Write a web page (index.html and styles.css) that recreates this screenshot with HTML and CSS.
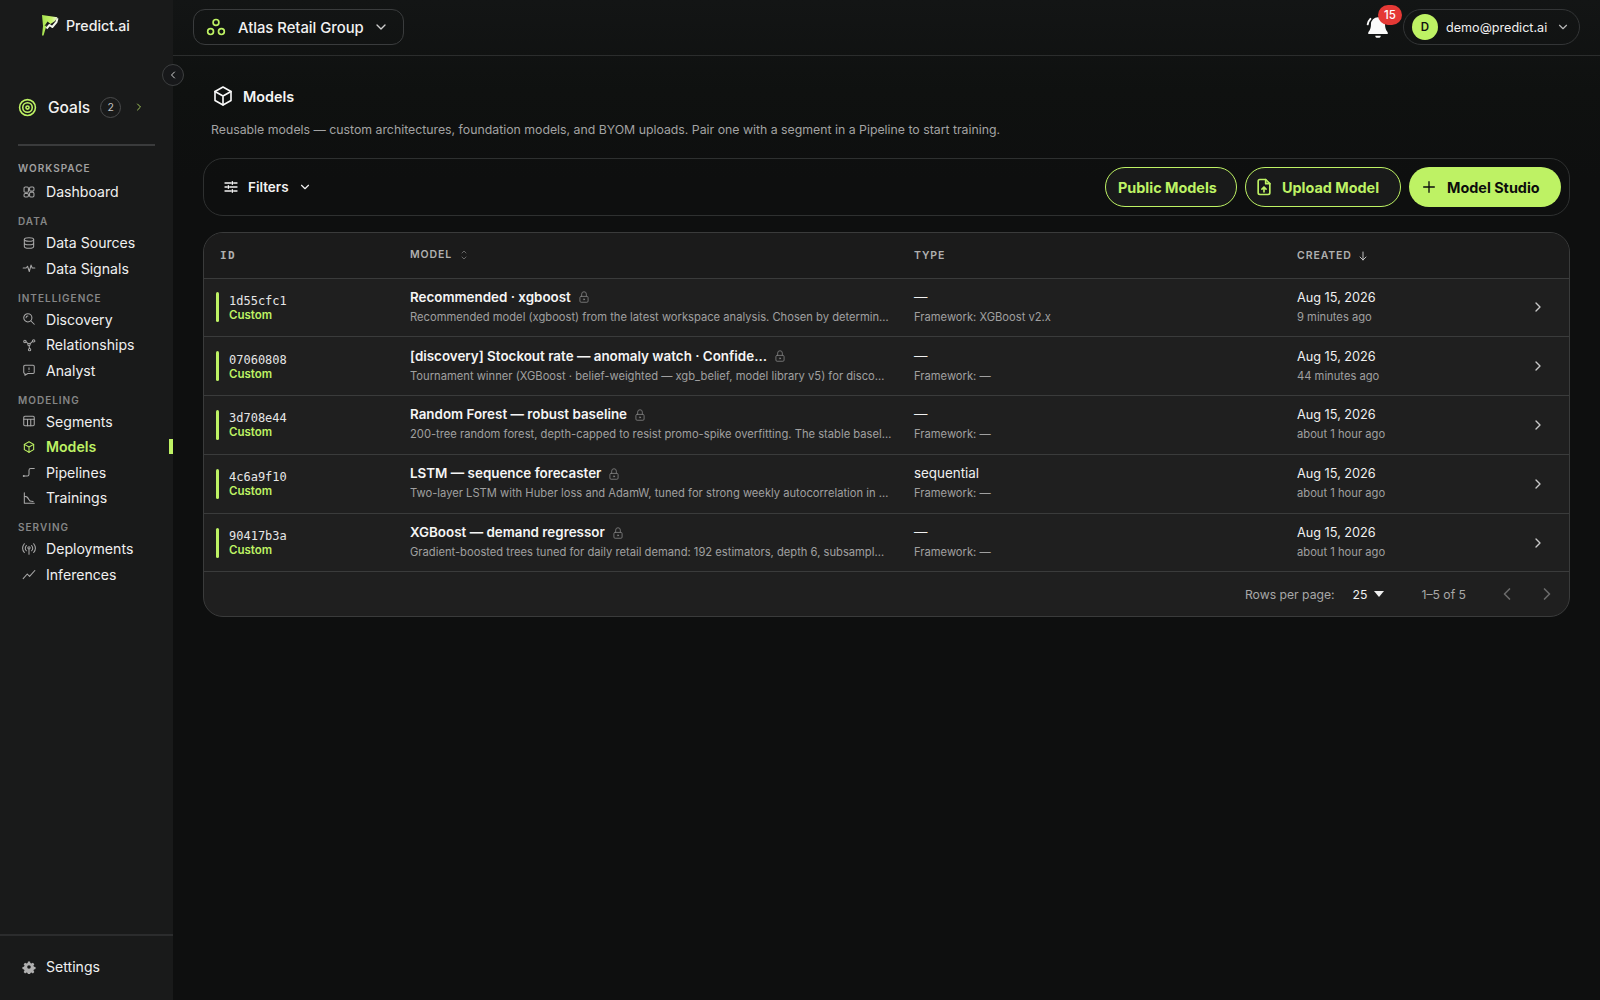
FILE: index.html
```html
<!DOCTYPE html>
<html lang="en">
<head>
<meta charset="utf-8">
<title>Models – Predict.ai</title>
<link rel="stylesheet" href="styles.css">
</head>
<body>
<svg class="sprite" width="0" height="0" aria-hidden="true">
  <defs>
    <symbol id="i-cube" viewBox="0 0 24 24"><path d="M12 3l8 4.500v9L12 21l-8-4.500v-9L12 3z"/><path d="M12 12l8-4.500M12 12v9M12 12L4 7.500"/></symbol>
    <symbol id="i-lock" viewBox="0 0 24 24"><rect x="5" y="11" width="14" height="10" rx="2"/><path d="M8 11V7a4 4 0 0 1 8 0v4"/><circle cx="12" cy="16" r="1"/></symbol>
    <symbol id="i-right" viewBox="0 0 24 24"><path d="M9 6l6 6-6 6"/></symbol>
    <symbol id="i-left" viewBox="0 0 24 24"><path d="M15 6l-6 6 6 6"/></symbol>
    <symbol id="i-down" viewBox="0 0 24 24"><path d="M6 9l6 6 6-6"/></symbol>
    <linearGradient id="logo-grad" x1="0" y1="0" x2="1" y2="0"><stop offset="0" stop-color="#a6e34f"/><stop offset=".6" stop-color="#c6f26a"/><stop offset="1" stop-color="#eef7d8"/></linearGradient>
  </defs>
</svg>
<div class="app">
  <aside class="sidebar">
    <div class="brand">
      <svg class="brand-logo" viewBox="0 0 18 21" width="18" height="21"><path class="logo-fill" d="M1 0l15.500 2.200-2.500 3.800-4.500 3L6.500 6.500 3.500 11l2-.5L2.500 20.500 1 20.500 2 11 1 0z"/><path class="logo-line" d="M5.500 13.500L8.500 10l2.800 2L15.500 7l1-3.800"/></svg>
      <span class="brand-name">Predict.ai</span>
    </div>
    <button class="collapse" aria-label="Collapse sidebar"><svg class="ic" width="12" height="12"><use href="#i-left"/></svg></button>
    <div class="goals">
      <svg class="goals-icon" viewBox="0 0 24 24" width="19" height="19"><circle cx="12" cy="12" r="10"/><circle cx="12" cy="12" r="6"/><circle cx="12" cy="12" r="2"/></svg>
      <span class="goals-label">Goals</span>
      <span class="goals-badge">2</span>
      <svg class="ic goals-chev" width="12" height="12"><use href="#i-right"/></svg>
    </div>
    <nav class="nav">
      <div class="nav-group">WORKSPACE</div>
      <a class="nav-item"><svg class="ic" viewBox="0 0 24 24" width="14" height="14"><rect x="3.500" y="3.500" width="7.500" height="9" rx="2"/><rect x="13" y="3.500" width="7.500" height="7" rx="2"/><rect x="3.500" y="14.500" width="7.500" height="6" rx="2"/><rect x="13" y="12.500" width="7.500" height="8" rx="2"/></svg>Dashboard</a>
      <div class="nav-group">DATA</div>
      <a class="nav-item"><svg class="ic" viewBox="0 0 24 24" width="14" height="14"><ellipse cx="12" cy="6" rx="8" ry="3"/><path d="M4 6v12c0 1.700 3.600 3 8 3s8-1.300 8-3V6M4 12c0 1.700 3.600 3 8 3s8-1.300 8-3"/></svg>Data Sources</a>
      <a class="nav-item"><svg class="ic" viewBox="0 0 24 24" width="14" height="14"><path d="M2 12h5l2.500-3 3 9 3-11 2 5h4.500"/></svg>Data Signals</a>
      <div class="nav-group">INTELLIGENCE</div>
      <a class="nav-item"><svg class="ic" viewBox="0 0 24 24" width="14" height="14"><circle cx="10" cy="10" r="7"/><path d="M21 21l-6-6M7 10a3 3 0 0 1 3-3"/></svg>Discovery</a>
      <a class="nav-item"><svg class="ic" viewBox="0 0 24 24" width="14" height="14"><circle cx="5" cy="6" r="2"/><circle cx="20" cy="5" r="2"/><circle cx="13" cy="20" r="2"/><circle cx="12" cy="11" r="2"/><path d="M7 6.500l3.500 3M18 5.600L14 9.700M12.200 13l.6 5"/></svg>Relationships</a>
      <a class="nav-item"><svg class="ic" viewBox="0 0 24 24" width="14" height="14"><path d="M5 4h14a2 2 0 0 1 2 2v10a2 2 0 0 1-2 2h-9l-5 3v-3a2 2 0 0 1-2-2V6a2 2 0 0 1 2-2z"/><path d="M12 8v3M12 14v.1"/></svg>Analyst</a>
      <div class="nav-group">MODELING</div>
      <a class="nav-item"><svg class="ic" viewBox="0 0 24 24" width="14" height="14"><rect x="3" y="4" width="18" height="16" rx="2"/><path d="M3 9h18M9.500 9v11M15 9v11"/></svg>Segments</a>
      <a class="nav-item nav-item-active"><svg class="ic" width="14" height="14"><use href="#i-cube"/></svg>Models</a>
      <a class="nav-item"><svg class="ic" viewBox="0 0 24 24" width="14" height="14"><path d="M3 19h6c2 0 3-1 3-3V9c0-2 1-3 3-3h6"/><circle cx="3" cy="19" r=".8"/></svg>Pipelines</a>
      <a class="nav-item"><svg class="ic" viewBox="0 0 24 24" width="14" height="14"><path d="M4 3v18h17M4 9c5 0 6 2 8 6s4 2 7 3"/></svg>Trainings</a>
      <div class="nav-group">SERVING</div>
      <a class="nav-item"><svg class="ic" viewBox="0 0 24 24" width="14" height="14"><circle cx="12" cy="10" r="2"/><path d="M12 12v9M7.500 6a7 7 0 0 0 0 9M16.500 6a7 7 0 0 1 0 9M4 3a12 12 0 0 0 0 15M20 3a12 12 0 0 1 0 15"/></svg>Deployments</a>
      <a class="nav-item"><svg class="ic" viewBox="0 0 24 24" width="14" height="14"><path d="M2 20l7-8 4 4 9-10"/></svg>Inferences</a>
    </nav>
    <div class="sidebar-foot">
      <a class="nav-item"><svg class="ic-fill" viewBox="0 0 24 24" width="14" height="14"><path fill-rule="evenodd" d="M10 1.500h4l.6 3 2.300 1 2.600-1.700 2.800 2.800-1.700 2.600 1 2.300 3 .6v4l-3 .6-1 2.300 1.700 2.600-2.800 2.800-2.600-1.700-2.300 1-.6 3h-4l-.6-3-2.300-1-2.600 1.700-2.800-2.800 1.700-2.600-1-2.300-3-.6v-4l3-.6 1-2.300L1.700 6.600l2.800-2.800 2.600 1.700 2.300-1 .6-3zM12 8.500a3.500 3.500 0 1 0 0 7 3.500 3.500 0 0 0 0-7z" transform="translate(1.300 1.300) scale(.89)"/></svg>Settings</a>
    </div>
  </aside>
  <div class="main">
    <header class="topbar">
      <button class="workspace">
        <svg class="workspace-icon" viewBox="0 0 24 24" width="20" height="20"><circle cx="12" cy="6.500" r="3.500"/><circle cx="5.500" cy="17.500" r="3.500"/><circle cx="18.500" cy="17.500" r="3.500"/></svg>
        <span class="workspace-name">Atlas Retail Group</span>
        <svg class="ic" width="16" height="16"><use href="#i-down"/></svg>
      </button>
      <div class="top-actions">
        <div class="bell">
          <svg class="bell-icon" viewBox="0 0 24 24" width="26" height="26"><path d="M12 3a6.500 6.500 0 0 0-6.500 6.500c0 4.500-1.500 6-2.500 7.500v1.500h18V17c-1-1.500-2.500-3-2.500-7.500A6.500 6.500 0 0 0 12 3z"/><path d="M9.500 20h5a2.500 2 0 0 1-5 0z"/><path class="bell-ring" d="M2.500 9.500A9 9 0 0 1 5 4.500"/></svg>
          <span class="bell-badge">15</span>
        </div>
        <button class="user">
          <span class="avatar">D</span>
          <span class="user-mail">demo@predict.ai</span>
          <svg class="ic" width="14" height="14"><use href="#i-down"/></svg>
        </button>
      </div>
    </header>
    <main class="content">
      <div class="title-row">
        <svg class="ic title-icon" width="24" height="24"><use href="#i-cube"/></svg>
        <h1 class="title">Models</h1>
      </div>
      <p class="desc">Reusable models — custom architectures, foundation models, and BYOM uploads. Pair one with a segment in a Pipeline to start training.</p>
      <div class="toolbar">
        <button class="filters">
          <svg class="ic" viewBox="0 0 24 24" width="16" height="16"><path d="M3 6h9M16 6h5M3 12h3M10 12h11M3 18h9M16 18h5M14 4v4M8 10v4M14 16v4"/></svg>
          <span>Filters</span>
          <svg class="ic" width="14" height="14"><use href="#i-down"/></svg>
        </button>
        <div class="toolbar-actions">
          <button class="btn btn-outline">Public Models</button>
          <button class="btn btn-outline btn-upload"><svg class="ic" viewBox="0 0 24 24" width="20" height="20"><path d="M14 3H7a2 2 0 0 0-2 2v14a2 2 0 0 0 2 2h10a2 2 0 0 0 2-2V8l-5-5z"/><path d="M14 3v5h5M12 18v-6M9.500 14.500L12 12l2.500 2.500"/></svg>Upload Model</button>
          <button class="btn btn-solid"><svg class="ic" viewBox="0 0 24 24" width="16" height="16"><path d="M12 4v16M4 12h16"/></svg>Model Studio</button>
        </div>
      </div>
      <div class="table-card">
        <table class="table">
          <colgroup><col class="col-id"><col class="col-model"><col class="col-type"><col class="col-created"><col class="col-go"></colgroup>
          <thead>
            <tr>
              <th class="th-id">ID</th>
              <th>MODEL <svg class="ic sort" viewBox="0 0 24 24" width="12" height="14"><path d="M8 8l4-4 4 4M8 16l4 4 4-4"/></svg></th>
              <th>TYPE</th>
              <th>CREATED <svg class="ic sort-on" viewBox="0 0 24 24" width="12" height="12"><path d="M12 4v16M6 14l6 6 6-6"/></svg></th>
              <th></th>
            </tr>
          </thead>
          <tbody>
            <tr>
              <td><div class="idcell"><div><div class="mono">1d55cfc1</div><div class="custom">Custom</div></div></div></td>
              <td><div class="name">Recommended · xgboost <svg class="ic lock" width="14" height="14"><use href="#i-lock"/></svg></div><div class="sub">Recommended model (xgboost) from the latest workspace analysis. Chosen by determin…</div></td>
              <td><div class="type">—</div><div class="sub">Framework: XGBoost v2.x</div></td>
              <td><div class="date">Aug 15, 2026</div><div class="sub">9 minutes ago</div></td>
              <td class="go"><svg class="ic go-icon" width="16" height="16"><use href="#i-right"/></svg></td>
            </tr>
            <tr>
              <td><div class="idcell"><div><div class="mono">07060808</div><div class="custom">Custom</div></div></div></td>
              <td><div class="name">[discovery] Stockout rate — anomaly watch · Confide… <svg class="ic lock" width="14" height="14"><use href="#i-lock"/></svg></div><div class="sub">Tournament winner (XGBoost · belief-weighted — xgb_belief, model library v5) for disco…</div></td>
              <td><div class="type">—</div><div class="sub">Framework: —</div></td>
              <td><div class="date">Aug 15, 2026</div><div class="sub">44 minutes ago</div></td>
              <td class="go"><svg class="ic go-icon" width="16" height="16"><use href="#i-right"/></svg></td>
            </tr>
            <tr>
              <td><div class="idcell"><div><div class="mono">3d708e44</div><div class="custom">Custom</div></div></div></td>
              <td><div class="name">Random Forest — robust baseline <svg class="ic lock" width="14" height="14"><use href="#i-lock"/></svg></div><div class="sub">200-tree random forest, depth-capped to resist promo-spike overfitting. The stable basel…</div></td>
              <td><div class="type">—</div><div class="sub">Framework: —</div></td>
              <td><div class="date">Aug 15, 2026</div><div class="sub">about 1 hour ago</div></td>
              <td class="go"><svg class="ic go-icon" width="16" height="16"><use href="#i-right"/></svg></td>
            </tr>
            <tr>
              <td><div class="idcell"><div><div class="mono">4c6a9f10</div><div class="custom">Custom</div></div></div></td>
              <td><div class="name">LSTM — sequence forecaster <svg class="ic lock" width="14" height="14"><use href="#i-lock"/></svg></div><div class="sub">Two-layer LSTM with Huber loss and AdamW, tuned for strong weekly autocorrelation in …</div></td>
              <td><div class="type">sequential</div><div class="sub">Framework: —</div></td>
              <td><div class="date">Aug 15, 2026</div><div class="sub">about 1 hour ago</div></td>
              <td class="go"><svg class="ic go-icon" width="16" height="16"><use href="#i-right"/></svg></td>
            </tr>
            <tr>
              <td><div class="idcell"><div><div class="mono">90417b3a</div><div class="custom">Custom</div></div></div></td>
              <td><div class="name">XGBoost — demand regressor <svg class="ic lock" width="14" height="14"><use href="#i-lock"/></svg></div><div class="sub">Gradient-boosted trees tuned for daily retail demand: 192 estimators, depth 6, subsampl…</div></td>
              <td><div class="type">—</div><div class="sub">Framework: —</div></td>
              <td><div class="date">Aug 15, 2026</div><div class="sub">about 1 hour ago</div></td>
              <td class="go"><svg class="ic go-icon" width="16" height="16"><use href="#i-right"/></svg></td>
            </tr>
          </tbody>
        </table>
        <div class="pager">
          <span class="pager-label">Rows per page:</span>
          <span class="pager-size">25 <span class="caret"></span></span>
          <span class="pager-range">1–5 of 5</span>
          <svg class="ic pager-arrow" width="20" height="20"><use href="#i-left"/></svg>
          <svg class="ic pager-arrow" width="20" height="20"><use href="#i-right"/></svg>
        </div>
      </div>
    </main>
  </div>
</div>
</body>
</html>
```
FILE: styles.css
```css
* { box-sizing: border-box; }
html, body { margin: 0; height: 100%; }
body {
  background: #0e0f0f;
  color: #f2f2f2;
  font-family: Inter, "Liberation Sans", sans-serif;
  overflow: hidden;
}
button { font: inherit; color: inherit; background: none; border: 0; padding: 0; }
.sprite { position: absolute; }
.ic { fill: none; stroke: currentColor; stroke-width: 2; stroke-linecap: round; stroke-linejoin: round; flex: none; }
.ic-fill { fill: currentColor; flex: none; }

.app { display: flex; height: 1000px; }

/* sidebar */
.sidebar {
  position: relative;
  width: 173px;
  flex: none;
  background: #191a1a;
  display: flex;
  flex-direction: column;
}
.brand { display: flex; align-items: center; gap: 7px; padding: 13px 0 0 41px; height: 38px; }
.brand-logo { flex: none; }
.logo-fill { fill: url(#logo-grad); }
.logo-line { fill: none; stroke: #f4f7ec; stroke-width: 2; stroke-linejoin: round; }
.brand-name { font-size: 14.200px; font-weight: 500; color: #f0f0f0; }
.collapse {
  position: absolute;
  top: 64px;
  left: 162px;
  width: 22px;
  height: 22px;
  border-radius: 50%;
  border: 1px solid #3d3f40;
  background: #17181a;
  color: #d0d0d0;
  display: flex;
  align-items: center;
  justify-content: center;
  z-index: 2;
}
.goals { display: flex; align-items: center; margin-top: 57px; padding-left: 18px; height: 24px; }
.goals-icon { fill: none; stroke: #bef264; stroke-width: 2; flex: none; }
.goals-label { margin-left: 11px; font-size: 15.500px; font-weight: 500; }
.goals-badge {
  margin-left: 10px;
  width: 21px;
  height: 21px;
  border-radius: 50%;
  border: 1px solid #4a4b4c;
  font-size: 10.500px;
  color: #c4c4c4;
  display: flex;
  align-items: center;
  justify-content: center;
}
.goals-chev { margin-left: 12px; color: #a3c85a; }
.nav { margin: 25px 18px 0; border-top: 2px solid #3a3b3c; padding-top: 16px; }
.nav-group {
  font-size: 10px;
  font-weight: 600;
  letter-spacing: 1px;
  color: #858686;
  line-height: 13px;
  height: 13px;
  margin-top: 11px;
}
.nav-group:first-child { margin-top: 0; color: #a0a0a0; }
.nav-item {
  display: flex;
  align-items: center;
  gap: 10px;
  height: 25.500px;
  padding-left: 4px;
  font-size: 14.100px;
  color: #f0f0f0;
}
.nav-group + .nav-item { margin-top: 1.500px; }
.nav-group:first-child + .nav-item { margin-top: 3.800px; }
.nav-item .ic { color: #a8a8a8; stroke-width: 1.800; }
.nav-item .ic-fill { color: #b0b0b0; }
.nav-item-active { position: relative; color: #bef264; font-weight: 600; }
.nav-item-active .ic { color: #bef264; }
.nav-item-active::after {
  content: "";
  position: absolute;
  right: -18px;
  top: 5px;
  width: 4px;
  height: 15px;
  background: #bef264;
}
.sidebar-foot {
  margin-top: auto;
  border-top: 2px solid #2b2c2d;
  padding: 18px 0 20px 18px;
  height: 66px;
}

/* main */
.main { flex: 1; min-width: 0; display: flex; flex-direction: column; background: linear-gradient(180deg, #131515 0, #0f1110 90px, #0e0f0f 180px); }
.topbar {
  height: 56px;
  flex: none;
  border-bottom: 1px solid #2b2d2d;
  display: flex;
  align-items: center;
  justify-content: space-between;
  padding: 0 20px 1px 20px;
}
.workspace {
  width: 211px;
  height: 36px;
  border: 1px solid #3a3c3d;
  border-radius: 12px;
  display: flex;
  align-items: center;
  padding-left: 12px;
  color: #cfcfcf;
}
.workspace-icon { fill: none; stroke: #bef264; stroke-width: 2; flex: none; }
.workspace-name { margin: 2px 9px 0 12px; font-size: 14.800px; font-weight: 500; color: #f2f2f2; }
.top-actions { display: flex; align-items: center; }
.bell { position: relative; width: 40px; height: 36px; margin-right: -2px; display: flex; align-items: center; }
.bell-icon { fill: #fafafa; }
.bell-ring { fill: none; stroke: #fafafa; stroke-width: 1.800; stroke-linecap: round; }
.bell-badge {
  position: absolute;
  top: -4px;
  left: 13px;
  width: 24px;
  height: 20px;
  border-radius: 10px;
  background: #e53935;
  color: #fff;
  font-size: 11.500px;
  font-weight: 500;
  display: flex;
  align-items: center;
  justify-content: center;
}
.user {
  width: 177px;
  height: 36px;
  border: 1px solid #333536;
  border-radius: 18px;
  display: flex;
  align-items: center;
  padding-left: 8px;
  color: #b8b8b8;
}
.avatar {
  width: 26px;
  height: 26px;
  border-radius: 50%;
  background: #bef264;
  color: #111;
  font-size: 11.500px;
  font-weight: 600;
  display: flex;
  align-items: center;
  justify-content: center;
  flex: none;
}
.user-mail { margin: 0 9px 0 8px; font-size: 12.600px; color: #f0f0f0; }

.content { padding: 0 30px 0 30px; }
.title-row { display: flex; align-items: center; gap: 8px; margin: 28px 0 0 8px; height: 24px; }
.title-icon { color: #fafafa; stroke-width: 1.600; }
.title { margin: 0; font-size: 14.400px; font-weight: 600; color: #f5f5f5; }
.desc { margin: 13px 0 0 8px; font-size: 12.300px; line-height: 18px; color: #a3a3a3; }
.toolbar {
  height: 58px;
  margin-top: 19px;
  border: 1px solid #2e3030;
  border-radius: 20px;
  display: flex;
  align-items: center;
  justify-content: space-between;
  padding: 0 8px 0 19px;
}
.filters { display: flex; align-items: center; gap: 9px; font-size: 13.500px; font-weight: 600; color: #f2f2f2; }
.toolbar-actions { display: flex; gap: 8px; }
.btn {
  height: 40px;
  border-radius: 20px;
  display: flex;
  align-items: center;
  font-size: 14.400px;
  font-weight: 700;
}
.btn-outline { border: 1px solid #bef264; color: #bef264; background: #191a1a; width: 132px; padding-left: 12px; }
.btn-upload { width: 156px; gap: 8px; padding-left: 8px; }
.btn-solid { background: #bef264; color: #0c0c0c; width: 152px; gap: 10px; padding-left: 12px; }
.table-card {
  margin-top: 16px;
  border: 1px solid #3a3b3b;
  border-radius: 20px;
  background: #1f1f1f;
  overflow: hidden;
  width: 1367px;
}
.table { width: 100%; border-collapse: collapse; table-layout: fixed; }
.col-id { width: 190px; }
.col-model { width: 504px; }
.col-type { width: 383px; }
.col-created { width: 200px; }
.table th {
  height: 45px;
  padding: 0 0 0 16px;
  text-align: left;
  font-size: 10.500px;
  font-weight: 600;
  letter-spacing: .9px;
  color: #b0b0b0;
  background: #1b1b1b;
  border-bottom: 1px solid #3a3b3b;
}
.table th.th-id { font-family: "DejaVu Sans Mono", monospace; font-size: 11px; letter-spacing: 1.300px; }
.sort { vertical-align: middle; color: #808080; margin-left: 2px; stroke-width: 1.500; }
.sort-on { vertical-align: middle; color: #c0c0c0; margin-left: 2px; }
.table td {
  height: 58.800px;
  padding: 0 0 0 16px;
  border-bottom: 1px solid #3a3b3b;
  vertical-align: middle;
  white-space: nowrap;
}
.table td.go { padding: 0 0 0 49px; color: #c8c8c8; }
.go-icon { display: block; }
.idcell { position: relative; padding-left: 13px; height: 30px; margin-left: -4px; display: flex; align-items: center; }
.idcell::before {
  content: "";
  position: absolute;
  left: 0;
  top: 0;
  width: 3px;
  height: 30px;
  border-radius: 2px;
  background: #bef264;
}
.mono { font-family: "DejaVu Sans Mono", monospace; font-size: 12px; line-height: 16px; color: #e6e6e6; }
.custom { font-size: 11.500px; font-weight: 600; line-height: 13px; color: #bef264; }
.name { font-size: 13.400px; font-weight: 600; line-height: 19px; color: #f5f5f5; display: flex; align-items: center; gap: 6px; }
.lock { color: #7d7d7d; stroke-width: 1.500; }
.sub { font-size: 11.200px; line-height: 20px; color: #a0a0a0; }
.type { font-size: 13.400px; line-height: 19px; color: #f0f0f0; }
.date { font-size: 12.700px; line-height: 19px; color: #f0f0f0; }
.pager {
  height: 44px;
  display: flex;
  align-items: center;
  justify-content: flex-end;
  padding-right: 12px;
  font-size: 12.200px;
  color: #a8a8a8;
}
.pager-size { margin-left: 18px; color: #f0f0f0; font-size: 12.200px; display: flex; align-items: center; gap: 7px; }
.caret { width: 0; height: 0; border-left: 5.500px solid transparent; border-right: 5.500px solid transparent; border-top: 6px solid #f0f0f0; }
.pager-range { margin: 0 11px 0 37px; }
.pager-arrow { color: #6a6a6a; margin-left: 20px; }
```
